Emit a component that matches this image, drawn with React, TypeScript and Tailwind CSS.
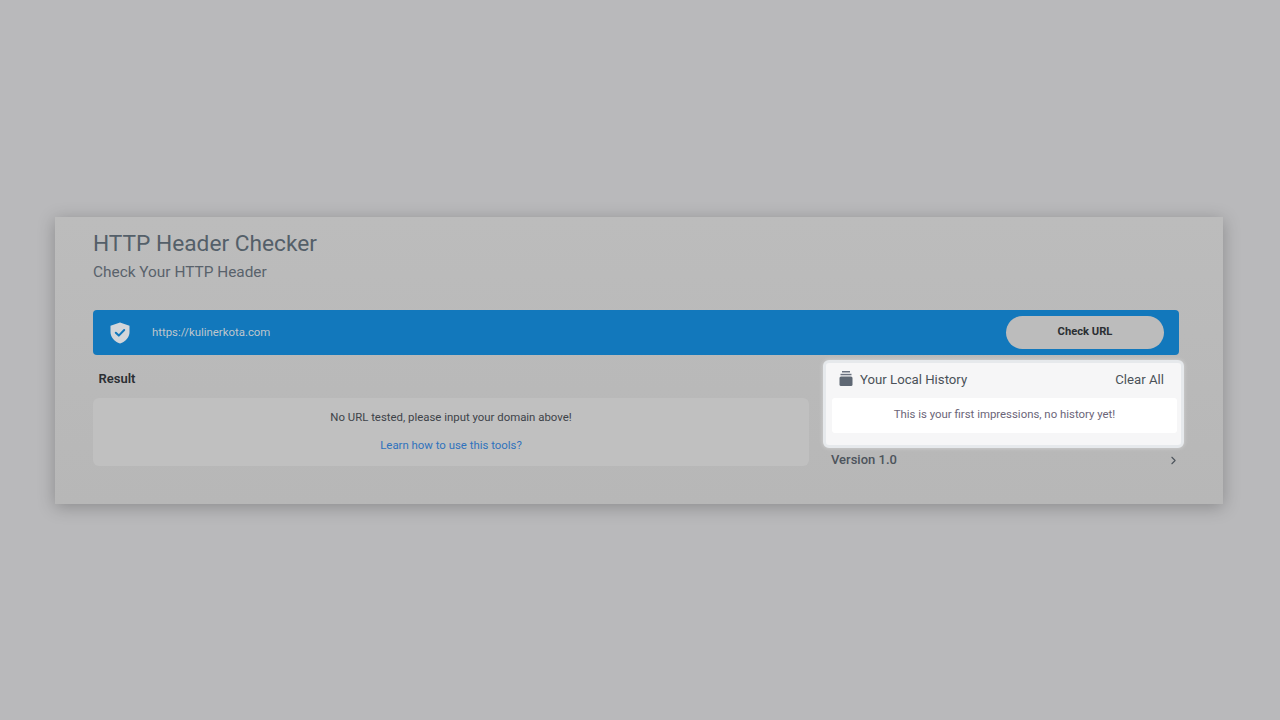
import React from 'react';
import { ChevronRight } from 'lucide-react';

function ShieldIcon() {
  return (
    <svg width="20" height="22" viewBox="0 0 20 22" className="shrink-0">
      <path d="M10 0.5 L19.5 3.8 V10 C19.5 15.5 15.5 19.6 10 21.5 C4.5 19.6 0.5 15.5 0.5 10 V3.8 Z" fill="#d3d6da" />
      <path d="M5.8 10.8 L8.8 13.6 L14.2 8" fill="none" stroke="#1278bc" strokeWidth="2" strokeLinecap="round" strokeLinejoin="round" />
    </svg>
  );
}

function StackIcon() {
  return (
    <svg width="14" height="15" viewBox="0 0 14 15" className="shrink-0 mt-[-2px]">
      <rect x="3" y="0" width="8" height="1.5" fill="#6b7280" />
      <rect x="1.5" y="2.8" width="11" height="1.5" fill="#6b7280" />
      <rect x="0.5" y="5.5" width="13" height="9.5" rx="1.5" fill="#5f6874" />
    </svg>
  );
}

export default function App() {
  return (
    <div className="w-[1280px] h-[720px] overflow-hidden bg-[#b9b9bb] flex items-center pt-[1px] font-['Roboto',sans-serif]">
      <div className="ml-[55px] w-[1168px] h-[287px] bg-gradient-to-b from-[#bcbcbc] to-[#b7b7b7] shadow-[0_3px_16px_rgba(0,0,0,0.25)] pt-[12px] pl-[38px] pr-[44px]">
        <h1 className="text-[22.7px] leading-[30px] text-[#545f69]">HTTP Header Checker</h1>
        <p className="text-[15.4px] leading-[24px] mt-[1px] text-[#59626b]">Check Your HTTP Header</p>

        <div className="mt-[26px] h-[45px] bg-[#1278bc] rounded-[4px] flex items-center pl-[17px] pr-[15px]">
          <ShieldIcon />
          <span className="ml-[22px] text-[11.4px] text-[#bfc6cc]">https://kulinerkota.com</span>
          <button className="ml-auto w-[158px] h-[33px] rounded-full bg-[#bcbcbc] text-[11.2px] font-bold text-[#2b2f33]">
            Check URL
          </button>
        </div>

        <div className="flex mt-[5px] relative">
          <div className="w-[716px]">
            <div className="h-[38px] pl-[5.5px] flex items-center text-[13px] font-semibold text-[#2a2e33]">Result</div>
            <div className="h-[68px] bg-[#c0c0c0] rounded-[6px] flex flex-col items-center pt-[11px] text-[11.4px]">
              <p className="leading-[16px] text-[#3e4349]">No URL tested, please input your domain above!</p>
              <a className="mt-[12px] leading-[16px] text-[#2f72bd]">Learn how to use this tools?</a>
            </div>
          </div>

          <div className="ml-[22px] w-[348px] pt-[87px]">
            <div className="flex items-center justify-between h-[26px]">
              <span className="text-[13px] font-medium text-[#4d545c]">Version 1.0</span>
              <ChevronRight size={13} strokeWidth={2} className="text-[#4d545c] mr-[-1px]" />
            </div>
          </div>

          {/* history dropdown over the right column */}
          <div className="absolute left-[730px] top-0 w-[361px] h-[88px] bg-[#f6f6f7] border-[3px] border-[#e6e9ec] rounded-[6px] shadow-[0_0_4px_rgba(255,255,255,0.4)] pl-[6px] pr-[4px]">
            <div className="h-[33px] mb-[2px] flex items-center pl-[7px] pr-[13px] text-[13.2px] text-[#4b5259]">
              <StackIcon />
              <span className="ml-[7px] flex-1">Your Local History</span>
              <span>Clear All</span>
            </div>
            <div className="h-[35px] pb-[1px] bg-white rounded-[3px] flex items-center justify-center text-[11.4px] text-[#6b6578]">
              This is your first impressions, no history yet!
            </div>
          </div>
        </div>
      </div>
    </div>
  );
}
